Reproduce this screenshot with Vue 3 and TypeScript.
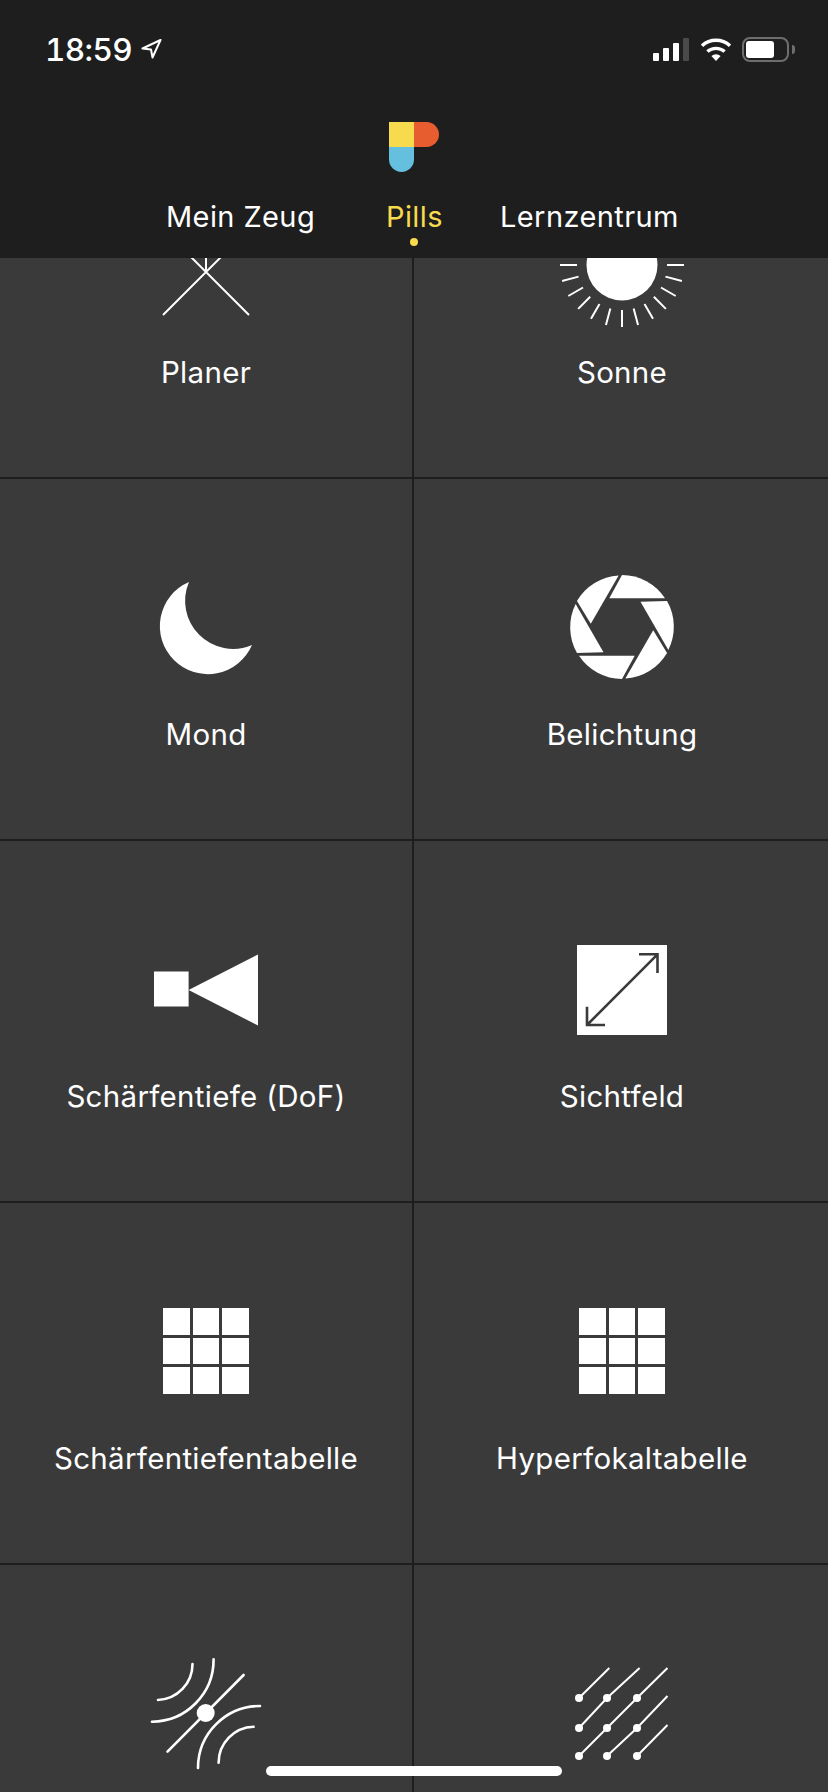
<script setup lang="ts">
type Tool = { id: string; label?: string; icon: string };

// the last row sits below the fold, only its icons are visible
const tools: Tool[] = [
  { id: 'planner', label: 'Planer', icon: 'planner' },
  { id: 'sun', label: 'Sonne', icon: 'sun' },
  { id: 'moon', label: 'Mond', icon: 'moon' },
  { id: 'exposure', label: 'Belichtung', icon: 'aperture' },
  { id: 'dof', label: 'Schärfentiefe (DoF)', icon: 'dof' },
  { id: 'fov', label: 'Sichtfeld', icon: 'fov' },
  { id: 'dof-table', label: 'Schärfentiefentabelle', icon: 'table' },
  { id: 'hyper-table', label: 'Hyperfokaltabelle', icon: 'table' },
  { id: 'waves', icon: 'waves' },
  { id: 'stars', icon: 'stars' },
];

const rayAngles = Array.from({ length: 24 }, (_, i) => i * 15);
const bladeAngles = [0, 60, 120, 180, 240, 300];
const starDots = [
  [-43, -15], [-15, -15], [15, -15],
  [-43, 15], [-15, 15], [15, 15],
  [-43, 43], [-15, 43], [15, 43],
];
</script>

<template>
  <div class="phone">
    <header class="top">
      <div class="status">
        <div class="clock">
          <span>18:59</span>
          <svg class="locate" viewBox="0 0 21 20">
            <path d="M19.5 1 L1.5 9.5 L10 10.5 L11.5 18.5 Z" fill="none" stroke="#fff" stroke-width="2" stroke-linejoin="round" />
          </svg>
        </div>
        <div class="status-icons">
          <div class="signal">
            <i class="bar b1"></i>
            <i class="bar b2"></i>
            <i class="bar b3"></i>
            <i class="bar b4"></i>
          </div>
          <svg class="wifi" viewBox="0 0 32 24">
            <path d="M16 24 L11.4 19 A7 7 0 0 1 20.6 19 Z" fill="#fff" />
            <path d="M7.4 14.6 A13 13 0 0 1 24.6 14.6" fill="none" stroke="#fff" stroke-width="3.4" />
            <path d="M2 8.8 A20.5 20.5 0 0 1 30 8.8" fill="none" stroke="#fff" stroke-width="3.4" />
          </svg>
          <div class="battery">
            <div class="battery-level"></div>
          </div>
          <i class="battery-nub"></i>
        </div>
      </div>
      <svg class="logo" viewBox="0 0 50 50">
        <path d="M25 0 H37.5 A12.5 12.5 0 0 1 37.5 25 H25 Z" fill="#e85d2f" />
        <path d="M0 25 H25 V37.5 A12.5 12.5 0 0 1 0 37.5 Z" fill="#65bfde" />
        <rect width="25" height="25" fill="#f8da4e" />
      </svg>
      <nav class="tabs">
        <span class="tab tab-left">Mein Zeug</span>
        <span class="tab tab-active">Pills</span>
        <span class="tab tab-right">Lernzentrum</span>
      </nav>
      <i class="tab-dot"></i>
    </header>

    <main class="content">
      <div class="grid">
        <div v-for="tool in tools" :key="tool.id" class="cell">
          <div v-if="tool.icon === 'table'" class="table-icon">
            <i v-for="n in 9" :key="n"></i>
          </div>
          <svg v-else class="icon" viewBox="-60 -60 120 120">
            <g v-if="tool.icon === 'planner'" stroke="#fff" stroke-width="2" fill="none">
              <path d="M-43 50 L43 -36 M43 50 L-43 -36 M0 7 V-40" />
            </g>
            <g v-else-if="tool.icon === 'sun'">
              <circle r="35.5" fill="#fff" />
              <line
                v-for="a in rayAngles"
                :key="a"
                x1="45"
                x2="62"
                stroke="#fff"
                stroke-width="2"
                :transform="`rotate(${a})`"
              />
            </g>
            <path
              v-else-if="tool.icon === 'moon'"
              d="M-17 -45 A48 48 0 1 0 46 18 A48 48 0 0 1 -17 -45 Z"
              fill="#fff"
            />
            <g v-else-if="tool.icon === 'aperture'" fill="#fff">
              <path
                v-for="a in bladeAngles"
                :key="a"
                d="M0 -52 L-12.7 -28.7 L43 -28.7 A52 52 0 0 0 0 -52 Z"
                :transform="`rotate(${a})`"
              />
            </g>
            <g v-else-if="tool.icon === 'dof'" fill="#fff">
              <rect x="-52" y="-17.5" width="34.6" height="35" />
              <path d="M-17.4 1 L52 -34.5 V36.5 Z" />
            </g>
            <g v-else-if="tool.icon === 'fov'">
              <rect x="-45" y="-44" width="90" height="90" fill="#fff" />
              <path
                d="M-35 36 L35.5 -34.7 M17 -34.7 H35.5 V-16 M-35 17.7 V36 H-17"
                fill="none"
                stroke="#3a3a3a"
                stroke-width="2.6"
              />
            </g>
            <g v-else-if="tool.icon === 'waves'" fill="none" stroke="#fff" stroke-width="2.6" stroke-linecap="round">
              <path d="M-38.5 38.7 L37.6 -38" />
              <path d="M7.6 -53.7 A62 62 0 0 1 -54 8.7" />
              <path d="M-13.5 -49 A36 36 0 0 1 -48 -13" />
              <path d="M54 -7 A62 62 0 0 0 -8 55" />
              <path d="M47.6 13.7 A36 36 0 0 0 12.6 49.7" />
              <circle cx="-0.3" r="9" fill="#fff" stroke="none" />
            </g>
            <g v-else fill="#fff">
              <path
                d="M-43 -15 L-12.7 -45 M-43 15 L-15 -15 L17.6 -45 M-43 43 L-15 15 L15 -15 L45.5 -45 M-15 43 L15 15 L45.5 -17 M15 43 L45.5 12"
                stroke="#fff"
                stroke-width="2"
                fill="none"
              />
              <circle v-for="d in starDots" :key="d.join()" :cx="d[0]" :cy="d[1]" r="4" />
            </g>
          </svg>
          <span v-if="tool.label" class="label">{{ tool.label }}</span>
        </div>
      </div>
    </main>

    <div class="home-bar"></div>
  </div>
</template>

<style scoped>
.phone {
  position: relative;
  width: 828px;
  height: 1792px;
  overflow: hidden;
  display: flex;
  flex-direction: column;
  background: #3a3a3a;
  color: #fff;
  font-family: Inter, "Liberation Sans", sans-serif;
}

.top {
  position: relative;
  flex: none;
  height: 258px;
  background: #1e1e1e;
}

.status {
  display: flex;
  justify-content: space-between;
  align-items: center;
  height: 26px;
  padding: 36px 33px 0 45px;
}

.clock {
  display: flex;
  align-items: center;
  gap: 9px;
  font-size: 31.5px;
  font-weight: 500;
  font-variant-numeric: tabular-nums;
  letter-spacing: -0.6px;
}

.locate {
  flex: none;
  width: 21px;
  height: 20px;
}

.status-icons {
  display: flex;
  align-items: center;
}

.signal {
  display: flex;
  align-items: flex-end;
  gap: 4px;
  height: 23px;
  margin-right: 11px;
}

.bar {
  display: block;
  width: 6px;
  background: #fff;
  border-radius: 1px;
}

.b1 { height: 8px; }
.b2 { height: 13px; }
.b3 { height: 18px; }
.b4 { height: 23px; background: #4a4a4a; }

.wifi {
  width: 32px;
  height: 24px;
  margin-right: 10px;
}

.battery {
  box-sizing: border-box;
  width: 47px;
  height: 25px;
  padding: 2px;
  border: 2px solid #6e6e6e;
  border-radius: 8px;
}

.battery-level {
  width: 28px;
  height: 100%;
  background: #fff;
  border-radius: 3px;
}

.battery-nub {
  width: 3px;
  height: 9px;
  margin-left: 3px;
  background: #6e6e6e;
  border-radius: 0 3px 3px 0;
}

.logo {
  display: block;
  width: 50px;
  height: 50px;
  margin: 60px auto 0;
}

.tabs {
  position: relative;
  height: 34px;
  margin-top: 28px;
  font-size: 29px;
  line-height: 34px;
  font-weight: 400;
  letter-spacing: 0.4px;
}

.tab {
  position: absolute;
  top: 0;
}

.tab-left { left: 166px; }
.tab-active { left: 386px; color: #f8da4e; }
.tab-right { left: 500px; }

.tab-dot {
  position: absolute;
  left: 410px;
  top: 238px;
  width: 8px;
  height: 8px;
  border-radius: 50%;
  background: #f8da4e;
}

.content {
  flex: 1;
  min-height: 0;
  overflow: hidden;
}

.grid {
  display: grid;
  grid-template-columns: 412px 414px;
  grid-auto-rows: 360px;
  gap: 2px;
  margin-top: -141px;
  background: #1e1e1e;
}

.cell {
  display: flex;
  flex-direction: column;
  align-items: center;
  padding-top: 88px;
  background: #3a3a3a;
}

.cell:nth-child(even) {
  padding-left: 2px;
}

.icon {
  flex: none;
  width: 120px;
  height: 120px;
  overflow: visible;
}

.table-icon {
  flex: none;
  display: grid;
  grid-template-columns: repeat(3, 1fr);
  grid-template-rows: repeat(3, 1fr);
  gap: 3px;
  width: 86px;
  height: 86px;
  margin: 17px 0;
}

.table-icon i {
  display: block;
  background: #fff;
}

.label {
  margin-top: 30px;
  font-size: 29.5px;
  line-height: 34px;
  font-weight: 400;
  letter-spacing: 0.3px;
  white-space: nowrap;
}

.home-bar {
  position: absolute;
  left: 266px;
  bottom: 16px;
  width: 296px;
  height: 10px;
  border-radius: 5px;
  background: #fff;
}
</style>
